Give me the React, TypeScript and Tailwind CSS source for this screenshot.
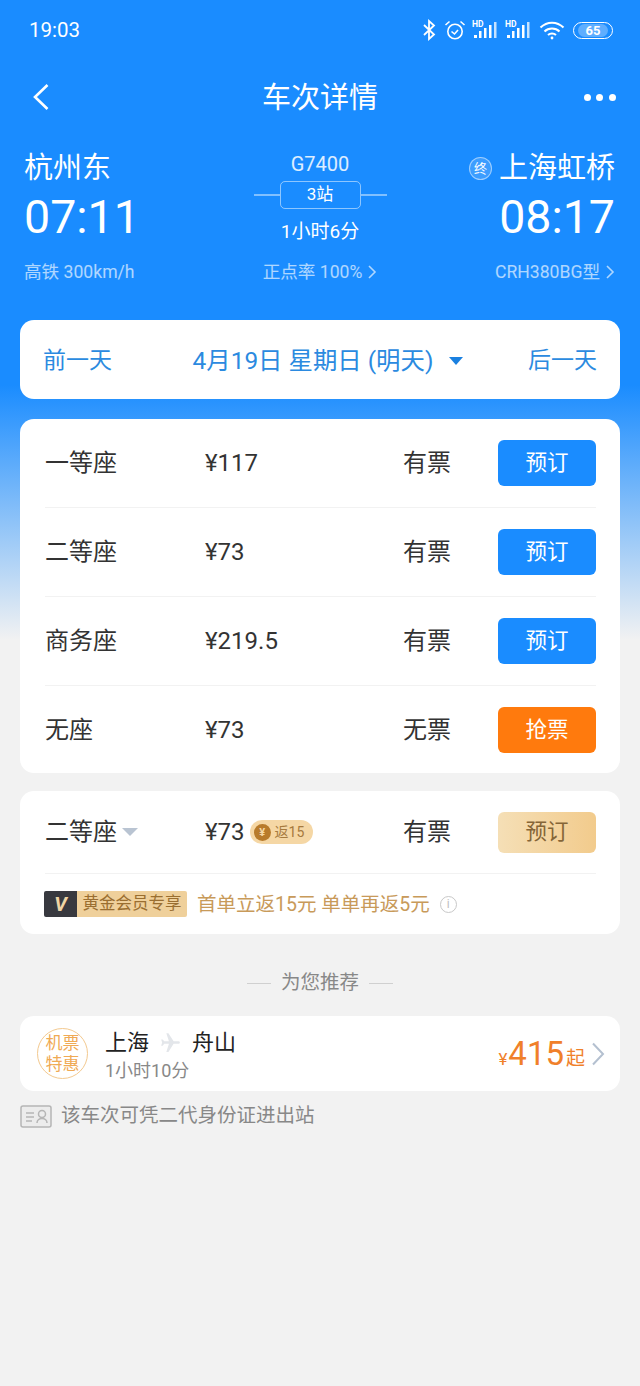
import React from 'react';

const seats = [
  { name: '一等座', price: '¥117', status: '有票', action: '预订', orange: false },
  { name: '二等座', price: '¥73', status: '有票', action: '预订', orange: false },
  { name: '商务座', price: '¥219.5', status: '有票', action: '预订', orange: false },
  { name: '无座', price: '¥73', status: '无票', action: '抢票', orange: true },
];

const Signal: React.FC = () => (
  <svg width="26" height="20" viewBox="0 0 26 20" fill="white">
    <rect x="2" y="15" width="3" height="3" />
    <rect x="7" y="11" width="2.5" height="7" />
    <rect x="12" y="8" width="2.5" height="10" />
    <rect x="17" y="5" width="2.5" height="13" />
    <rect x="22" y="2" width="2.5" height="16" opacity="0.75" />
    <text x="0" y="7" fontSize="8.5" fontWeight="700" fontFamily="Roboto, sans-serif">HD</text>
  </svg>
);

const MetaChevron: React.FC = () => (
  <svg className="ml-[5px]" width="10" height="16" viewBox="0 0 10 16" fill="none" stroke="currentColor" strokeWidth="1.6">
    <path d="M2 2l6 6-6 6" />
  </svg>
);

const StatusBar: React.FC = () => (
  <div className="h-[60px] pl-[29px] pr-[27px] flex items-center justify-between text-white">
    <span className="text-[20.5px]">19:03</span>
    <div className="flex items-center">
      <svg width="14" height="22" viewBox="0 0 14 22" fill="none" stroke="white" strokeWidth="1.8">
        <path d="M2 6l10 9.5L7 20V2l5 4.500L2 16" />
      </svg>
      <svg className="ml-[8px]" width="22" height="22" viewBox="0 0 22 22" fill="none" stroke="white" strokeWidth="1.6">
        <circle cx="11" cy="12.5" r="7.2" />
        <path d="M7.5 12.5l3 2.5 3.5-4M1.5 6l4-3.5M20.5 6l-4-3.5" />
      </svg>
      <div className="ml-[6px] flex"><Signal /></div>
      <div className="ml-[7px] flex"><Signal /></div>
      <svg className="ml-[8px]" width="26" height="20" viewBox="0 0 26 20" fill="none" stroke="white" strokeWidth="2">
        <path d="M1.5 7.5C8 1 18 1 24.5 7.5M5.5 11.5c4-4 11-4 15 0M9 15c2.200-2 5.800-2 8 0" />
        <circle cx="13" cy="18" r="1.4" fill="white" stroke="none" />
      </svg>
      <div className="ml-[8px] w-[40px] h-[17px] rounded-full border-[1.5px] border-white flex items-center justify-center">
        <div className="w-[30px] h-[13px] rounded-full bg-white/30 flex items-center justify-center text-[13px] font-bold leading-none">65</div>
      </div>
    </div>
  </div>
);

const NavBar: React.FC = () => (
  <div className="h-[74px] px-[24px] flex items-center justify-between text-white">
    <div className="w-[32px] pl-[8px]">
      <svg width="18" height="28" viewBox="0 0 18 28" fill="none" stroke="white" strokeWidth="2.6">
        <path d="M15.5 2L3 14l12.500 12" />
      </svg>
    </div>
    <span className="pt-[2px] text-[29px] leading-none">车次详情</span>
    <div className="w-[32px] flex justify-between">
      <span className="w-[7px] h-[7px] rounded-full bg-white" />
      <span className="w-[7px] h-[7px] rounded-full bg-white" />
      <span className="w-[7px] h-[7px] rounded-full bg-white" />
    </div>
  </div>
);

const TrainInfo: React.FC = () => (
  <div className="h-[186px] px-[25px] flex justify-between text-white">
    <div className="w-[200px] pt-[15px] flex flex-col items-start">
      <span className="-ml-[1px] mt-[1px] text-[29px] leading-[36px]">杭州东</span>
      <span className="-ml-[1px] mt-[3px] text-[46.5px] leading-[56px]">07:11</span>
      <span className="-ml-[1px] mt-[15px] text-[17.6px] leading-[24px] text-white/65">高铁 300km/h</span>
    </div>
    <div className="pt-[15px] flex flex-col items-center">
      <span className="mt-[3px] text-[20px] leading-[24px] text-white/85">G7400</span>
      <div className="mt-[5px] flex items-center">
        <span className="w-[26px] h-[2px] bg-white/45" />
        <span className="w-[81px] h-[28px] rounded-[5px] border-[1.5px] border-white/50 flex items-center justify-center text-[17px]">3站</span>
        <span className="w-[26px] h-[2px] bg-white/45" />
      </div>
      <span className="mt-[11px] text-[19px] leading-[24px]">1小时6分</span>
      <span className="mt-[16px] text-[17.6px] leading-[24px] text-white/65 flex items-center">正点率 100%<MetaChevron /></span>
    </div>
    <div className="w-[200px] pt-[15px] flex flex-col items-end">
      <div className="mt-[1px] flex items-center">
        <span className="w-[23px] h-[23px] mr-[7px] rounded-full border border-white/50 bg-white/15 flex items-center justify-center text-[13px] leading-none">终</span>
        <span className="text-[29px] leading-[36px]">上海虹桥</span>
      </div>
      <span className="mt-[3px] text-[46.5px] leading-[56px]">08:17</span>
      <span className="mt-[15px] text-[17.6px] leading-[24px] text-white/65 flex items-center">CRH380BG型<MetaChevron /></span>
    </div>
  </div>
);

const DateBar: React.FC = () => (
  <div className="h-[79px] px-[23px] pt-[3px] rounded-[14px] bg-white flex items-center justify-between text-[#2b8ae0] text-[23px]">
    <span>前一天</span>
    <div className="ml-[16px] flex items-center">
      <span className="text-[24.4px]">4月19日 星期日 (明天)</span>
      <span className="ml-[16px] w-0 h-0 border-x-[7px] border-t-[8px] border-x-transparent border-t-[#1a80e0]" />
    </div>
    <span>后一天</span>
  </div>
);

const SeatRow: React.FC<{ name: string; price: string; status: string; action: string; orange: boolean; last: boolean }> = ({ name, price, status, action, orange, last }) => (
  <div className={`h-[89px] flex items-center text-[#333] text-[24px] border-b ${last ? 'border-transparent' : 'border-[#f2f2f2]'}`}>
    <span className="w-[160px]">{name}</span>
    <span className="w-[198px]">{price}</span>
    <span className="w-[95px]">{status}</span>
    <button className={`w-[98px] h-[46px] rounded-[6px] text-white text-[21.5px] ${orange ? 'bg-[#ff7a0d]' : 'bg-[#1a8cff]'}`}>{action}</button>
  </div>
);

const SeatCard: React.FC = () => (
  <div className="mt-[20px] h-[354px] pl-[25px] pr-[24px] rounded-[14px] bg-white">
    {seats.map((s, i) => (
      <SeatRow key={s.name} {...s} last={i === seats.length - 1} />
    ))}
  </div>
);

const MemberCard: React.FC = () => (
  <div className="mt-[18px] h-[143px] pl-[25px] pr-[24px] rounded-[14px] bg-white">
    <div className="h-[83px] flex items-center text-[#333] text-[24px] border-b border-[#f2f2f2]">
      <div className="w-[160px] flex items-center">
        <span>二等座</span>
        <span className="ml-[5px] w-0 h-0 border-x-[8px] border-t-[8px] border-x-transparent border-t-[#b9c4d2]" />
      </div>
      <div className="w-[198px] flex items-center">
        <span>¥73</span>
        <div className="ml-[5px] w-[63px] h-[24px] rounded-full bg-[#f5d7a5] flex items-center pl-[4px]">
          <span className="w-[17px] h-[17px] rounded-full bg-[#b87b2c] text-[#f5d7a5] text-[11px] font-bold flex items-center justify-center leading-none">¥</span>
          <span className="ml-[4px] text-[14px] leading-none text-[#a67a3e]">返15</span>
        </div>
      </div>
      <span className="w-[95px]">有票</span>
      <button className="w-[98px] h-[41px] rounded-[6px] bg-gradient-to-r from-[#f5dfb6] to-[#f2cb8c] text-[#856537] text-[21.5px]">预订</button>
    </div>
    <div className="-ml-[1px] h-[60px] flex items-center">
      <div className="h-[26px] flex rounded-[2px] overflow-hidden">
        <span className="w-[33px] bg-[#38393f] text-[#f0d5a4] flex items-center justify-center text-[20px] leading-none font-bold italic">V</span>
        <span className="w-[110px] bg-[#efd09b] text-[#9a6e30] text-[16.5px] leading-none flex items-center justify-center">黄金会员专享</span>
      </div>
      <span className="ml-[10px] pt-[2px] text-[19.5px] leading-none text-[#c89a5a]">首单立返15元 单单再返5元</span>
      <span className="ml-[10px] w-[17px] h-[17px] rounded-full border border-[#c8c8c8] text-[#c0c0c0] text-[12px] leading-none flex items-center justify-center">i</span>
    </div>
  </div>
);

const FlightCard: React.FC = () => (
  <div className="mt-[20px] h-[75px] pl-[17px] pr-[15px] rounded-[14px] bg-white flex items-center">
    <div className="w-[51px] h-[51px] rounded-full border-[1.5px] border-[#f3c98f] flex items-center justify-center text-center text-[#f0aa55] text-[17px] leading-[21px]">
      机票<br />特惠
    </div>
    <div className="ml-[17px] pt-[3px] flex flex-col">
      <div className="flex items-center text-[22px] leading-[28px] text-[#222]">
        <span>上海</span>
        <svg className="mx-[9px]" width="25" height="25" viewBox="0 0 24 24" fill="#e3e6ea">
          <path d="M21 12c0-.8-.7-1.300-1.500-1.300H15L10 3H8l2.500 7.700H6L4.500 9H3l1 3-1 3h1.500L6 13.300h4.500L8 21h2l5-7.700h4.500c.8 0 1.500-.5 1.500-1.300z" />
        </svg>
        <span>舟山</span>
      </div>
      <span className="mt-[3px] text-[18px] leading-[22px] text-[#888]">1小时10分</span>
    </div>
    <div className="ml-auto mt-[3px] flex items-baseline text-[#f0802a]">
      <span className="text-[17px]">¥</span>
      <span className="ml-[1px] text-[33px] leading-none">415</span>
      <span className="ml-[2px] text-[19px]">起</span>
    </div>
    <svg className="ml-[6px]" width="14" height="24" viewBox="0 0 14 24" fill="none" stroke="#b4c0d0" strokeWidth="2">
      <path d="M2 1.5L12 12 2 22.5" />
    </svg>
  </div>
);

const App: React.FC = () => (
  <div
    className="w-[640px] h-[1386px] overflow-hidden bg-[linear-gradient(to_bottom,#1a8cff_0px,#1a8cff_385px,#f2f2f2_640px)]"
    style={{ fontFamily: 'Roboto, "Noto Sans CJK SC", sans-serif' }}
  >
    <StatusBar />
    <NavBar />
    <TrainInfo />
    <div className="px-[20px]">
      <DateBar />
      <SeatCard />
      <MemberCard />
      <div className="mt-[36px] h-[26px] flex items-center justify-center text-[#888] text-[19.5px]">
        <span className="w-[24px] h-px bg-[#d0d0d0]" />
        <span className="mx-[10px]">为您推荐</span>
        <span className="w-[24px] h-px bg-[#d0d0d0]" />
      </div>
      <FlightCard />
      <div className="mt-[11px] flex items-center text-[#888] text-[19.5px] leading-[28px]">
        <svg width="32" height="23" viewBox="0 0 32 23" fill="none" stroke="#b5b5b5" strokeWidth="1.5">
          <rect x="1" y="1" width="30" height="21" rx="2" fill="#ececec" />
          <path d="M6 8h8M6 12h8M6 16h6" />
          <circle cx="22" cy="9" r="3.5" />
          <path d="M17 18c0-6 10-6 10 0" />
        </svg>
        <span className="ml-[9px]">该车次可凭二代身份证进出站</span>
      </div>
    </div>
  </div>
);

export default App;
